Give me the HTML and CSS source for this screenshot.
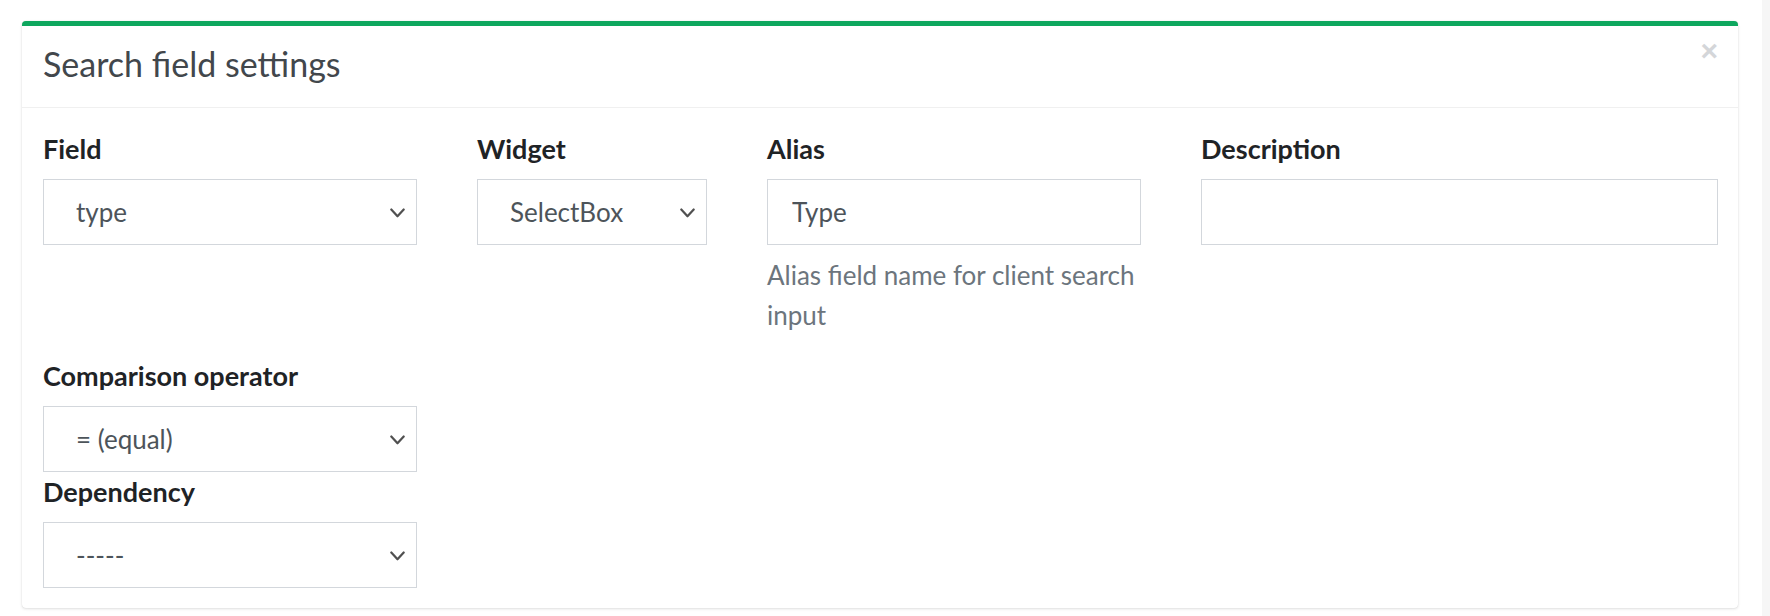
FILE: index.html
```html
<!DOCTYPE html>
<html lang="en">
<head>
<meta charset="utf-8">
<title>Search field settings</title>
<link rel="stylesheet" href="styles.css">
</head>
<body>
<div class="page">
  <main class="main">
    <section class="card">
      <header class="card-header">
        <h3 class="card-title">Search field settings</h3>
        <button class="close" type="button" aria-label="Close">&times;</button>
      </header>
      <div class="card-body">
        <div class="row">
          <div class="form-group">
            <label class="label">Field</label>
            <div class="select-wrap">
              <select class="control select"><option>type</option></select>
              <svg class="chevron" viewBox="0 0 15 10" width="15" height="10"><path d="M1.3 1.5 L7.5 8.3 L13.7 1.5" fill="none" stroke="#505050" stroke-width="2.2" stroke-linecap="round" stroke-linejoin="round"/></svg>
            </div>
          </div>
          <div class="form-group">
            <label class="label">Widget</label>
            <div class="select-wrap">
              <select class="control select"><option>SelectBox</option></select>
              <svg class="chevron" viewBox="0 0 15 10" width="15" height="10"><path d="M1.3 1.5 L7.5 8.3 L13.7 1.5" fill="none" stroke="#505050" stroke-width="2.2" stroke-linecap="round" stroke-linejoin="round"/></svg>
            </div>
          </div>
          <div class="form-group">
            <label class="label">Alias</label>
            <input class="control input" type="text" value="Type">
            <p class="help">Alias field name for client search input</p>
          </div>
          <div class="form-group">
            <label class="label">Description</label>
            <input class="control input" type="text" value="">
          </div>
        </div>
        <div class="row row-second">
          <div class="form-group">
            <label class="label">Comparison operator</label>
            <div class="select-wrap">
              <select class="control select"><option>= (equal)</option></select>
              <svg class="chevron" viewBox="0 0 15 10" width="15" height="10"><path d="M1.3 1.5 L7.5 8.3 L13.7 1.5" fill="none" stroke="#505050" stroke-width="2.2" stroke-linecap="round" stroke-linejoin="round"/></svg>
            </div>
            <label class="label">Dependency</label>
            <div class="select-wrap">
              <select class="control select"><option>-----</option></select>
              <svg class="chevron" viewBox="0 0 15 10" width="15" height="10"><path d="M1.3 1.5 L7.5 8.3 L13.7 1.5" fill="none" stroke="#505050" stroke-width="2.2" stroke-linecap="round" stroke-linejoin="round"/></svg>
            </div>
          </div>
        </div>
      </div>
    </section>
  </main>
  <div class="edge"></div>
</div>
</body>
</html>
```
FILE: styles.css
```css
* { box-sizing: border-box; }
html, body { margin: 0; padding: 0; background: #ffffff; }
body {
  font-family: Lato, "Liberation Sans", sans-serif;
  color: #212529;
}
.page {
  display: flex;
  width: 1770px;
  height: 616px;
  overflow: hidden;
}
.main {
  flex: 1;
  padding: 21px 24px 0 22px;
}
.edge {
  width: 8px;
  background: #f6f6f6;
}
.card {
  width: 1716px;
  background: #fff;
  border-top: 5px solid #0ea75e;
  border-radius: 4px;
  box-shadow: 0 0 1px rgba(0,0,0,0.14), 0 1px 3px rgba(0,0,0,0.12);
}
.card-header {
  display: flex;
  justify-content: space-between;
  align-items: flex-start;
  height: 82px;
  padding: 0 20px 0 21px;
  border-bottom: 1px solid #f0f0f0;
}
.card-title {
  margin: 0;
  padding-top: 14px;
  font-size: 34px;
  line-height: 48px;
  font-weight: 400;
  color: #42474c;
}
.close {
  margin-top: 10px;
  padding: 0;
  border: 0;
  background: none;
  font-family: "Liberation Sans", sans-serif;
  font-weight: 700;
  font-size: 30px;
  line-height: 30px;
  color: #d4d6d9;
}
.card-body {
  padding: 21px 20px 20px 21px;
}
.row {
  display: grid;
  grid-template-columns: 374px 230px 374px 517px;
  column-gap: 60px;
}
.row-second {
  margin-top: 21px;
}
.form-group {
  display: flex;
  flex-direction: column;
}
.label {
  display: block;
  height: 40px;
  margin-bottom: 10px;
  font-size: 27px;
  line-height: 40px;
  font-weight: 700;
  color: #1f2326;
}
.select-wrap {
  position: relative;
}
.control {
  display: block;
  width: 100%;
  height: 66px;
  margin: 0;
  border: 1px solid #d3d7dc;
  border-radius: 0;
  background: #fff;
  font-family: Lato, "Liberation Sans", sans-serif;
  font-size: 26px;
  color: #4d545a;
  outline: none;
}
.select {
  appearance: none;
  -webkit-appearance: none;
  padding: 0 40px 0 32px;
}
.input {
  padding: 0 24px;
}
.chevron {
  position: absolute;
  right: 12px;
  top: 29px;
  pointer-events: none;
}
.help {
  margin: 10px 0 0;
  font-size: 26px;
  line-height: 40px;
  color: #6c757d;
}
```
